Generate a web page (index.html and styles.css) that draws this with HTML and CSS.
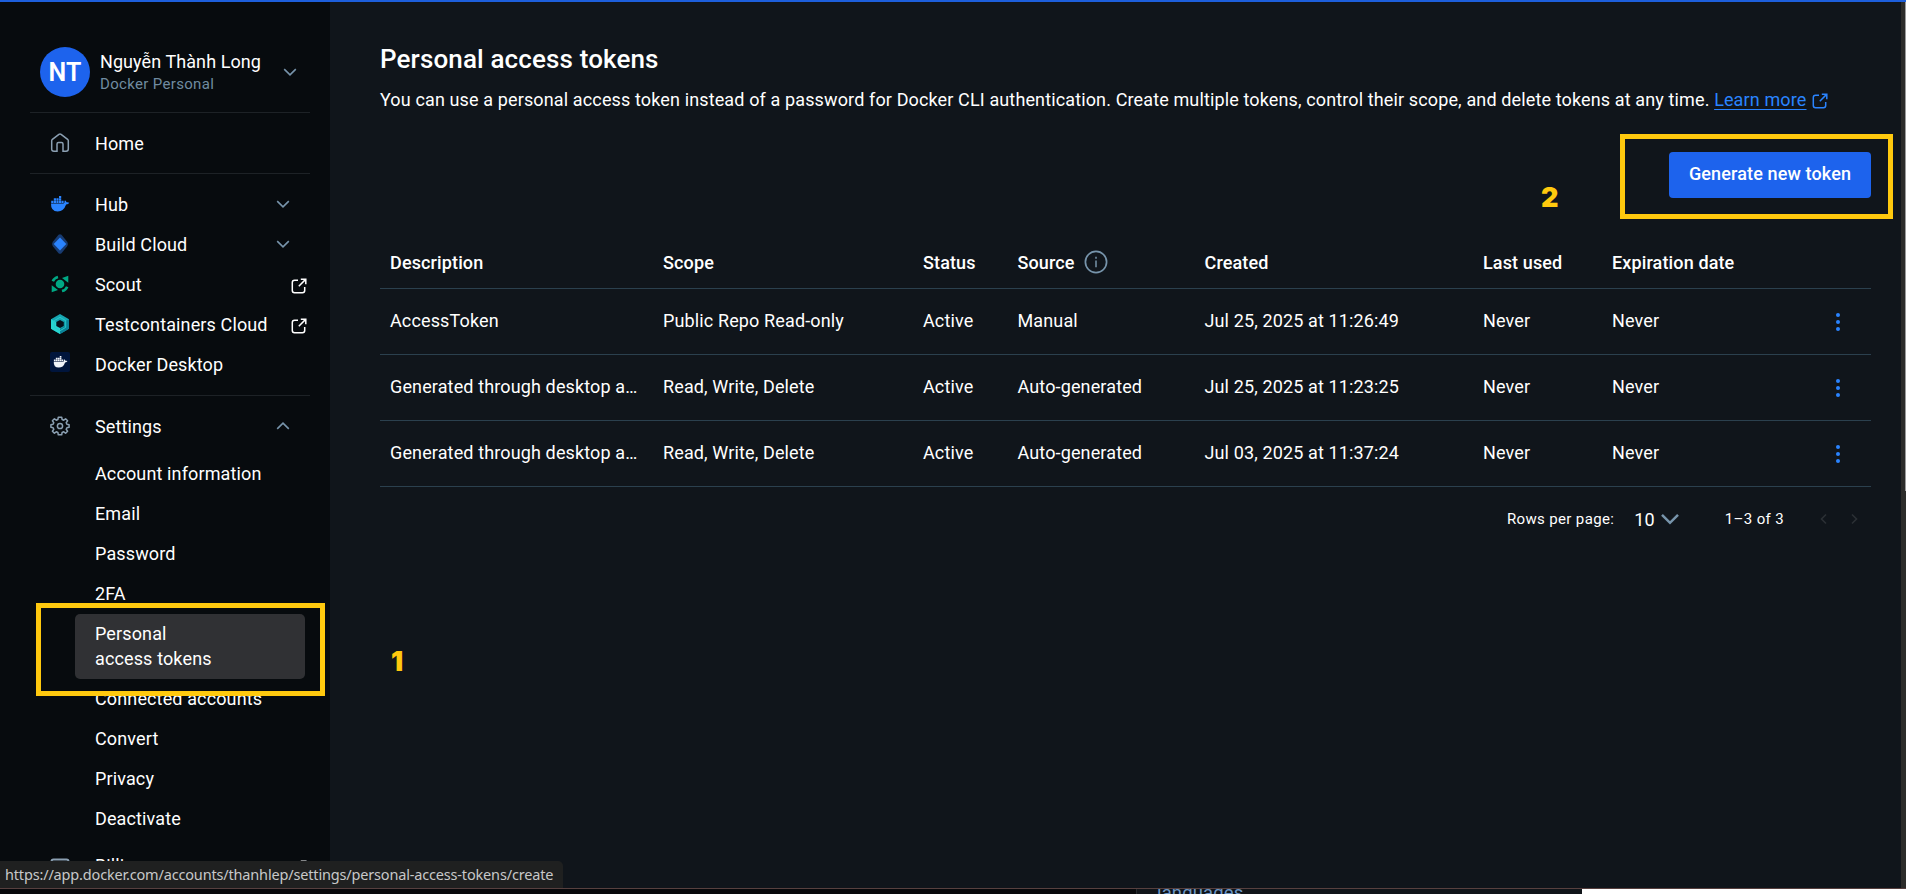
FILE: index.html
```html
<!DOCTYPE html>
<html lang="en">
<head>
<meta charset="utf-8">
<title>Personal access tokens</title>
<link rel="stylesheet" href="styles.css">
</head>
<body>
<svg class="defs" aria-hidden="true">
  <symbol id="down" viewBox="0 0 14 8"><path d="M1.2 1.2 7 6.8l5.8-5.6" fill="none" stroke="currentColor" stroke-width="1.6"/></symbol>
  <symbol id="up" viewBox="0 0 14 8"><path d="M1.2 6.8 7 1.2l5.8 5.6" fill="none" stroke="currentColor" stroke-width="1.6"/></symbol>
  <symbol id="ext" viewBox="0 0 16 16"><path d="M7 2.3H3.5Q1.3 2.3 1.3 4.500V12.500Q1.300 14.700 3.500 14.700H11.500Q13.700 14.700 13.700 12.500V9M9.800 1.200H14.800V6.200M14.600 1.400 7.800 8.200" fill="none" stroke="currentColor" stroke-width="1.500"/></symbol>
  <symbol id="whale" viewBox="0 0 20 16"><path d="M1 7.500H13.500Q14.800 7.300 14.500 5.300L15 4.300Q16.300 5.100 16.500 6.300Q18.300 6 19.300 6.800Q18.500 8.400 16.100 8.500Q13.800 15.400 7.600 15.400Q.7 15.400 1 7.500Z" fill="currentColor"/><path d="M1.200 4.800h2.200V7H1.200zM3.800 4.800H6V7H3.800zM6.400 4.800h2.200V7H6.400zM9 4.800h2.200V7H9zM11.600 4.800h2V7h-2zM3.800 2.300H6v2.100H3.800zM6.400 2.300h2.200v2.100H6.400zM9 2.300h2.200v2.100H9zM9 0h2.200v1.900H9z" fill="currentColor"/></symbol>
</svg>
<div class="screen">
  <div class="window">
    <aside class="sidebar">
      <div class="profile">
        <div class="avatar">NT</div>
        <div class="who"><span class="name">Nguyễn Thành Long</span><span class="plan">Docker Personal</span></div>
        <svg class="chev"><use href="#down"/></svg>
      </div>
      <nav class="group home">
        <div class="item"><svg class="icon muted" viewBox="0 0 20 20"><path d="M1.700 7.800Q1.700 6.900 2.400 6.300L8.900 1.300Q10 .5 11.100 1.300L17.600 6.300Q18.300 6.900 18.300 7.800V16Q18.300 18.200 16.100 18.200H13V11Q13 9.500 11.500 9.500H8.500Q7 9.500 7 11V18.200H3.900Q1.700 18.200 1.700 16Z" fill="none" stroke="currentColor" stroke-width="1.500"/></svg><span>Home</span></div>
      </nav>
      <nav class="group products">
        <div class="item"><svg class="icon hub"><use href="#whale"/></svg><span>Hub</span><svg class="chev"><use href="#down"/></svg></div>
        <div class="item"><svg class="icon" viewBox="0 0 20 20"><path d="M8.500.8Q10-.5 11.500.8L17 7.500Q18.700 10 17 12.500L11.500 19.200Q10 20.500 8.500 19.200L3 12.500Q1.300 10 3 7.500Z" fill="#183b70"/><path d="M10 3.600 16.300 10 10 16.400 3.700 10Z" fill="#2a84ff"/></svg><span>Build Cloud</span><svg class="chev"><use href="#down"/></svg></div>
        <div class="item"><svg class="icon" viewBox="0 0 20 20"><circle cx="10" cy="10" r="4.300" fill="#00a884"/><path d="M18.300 1.700V8.700L15.300 6.500 12 3.900ZM1.700 18.300V11.300L4.700 13.500 8 16.100Z" fill="#00a884"/><path d="M2.800 7.300Q4.100 3.900 8 2.900M17.200 12.700Q15.900 16.100 12 17.100" fill="none" stroke="#00a884" stroke-width="2.600"/></svg><span>Scout</span><svg class="ext"><use href="#ext"/></svg></div>
        <div class="item"><svg class="icon" viewBox="0 0 20 20"><path d="M10 0 19 5.200V14.800L10 20 1 14.800V5.200Z" fill="#17a6b2"/><path d="M1 5.200 10 10V20L1 14.800Z" fill="#27d6d0"/><path d="M19 5.200V14.800L10 20V15L14.500 12.500V7.500Z" fill="#0b8398"/><path d="M10 3.300 15.700 6.600V13.400L10 16.700 4.300 13.400V6.600Z" fill="none" stroke="#26cbc8" stroke-width="1"/><path d="M10 6 13.800 8.100V12L10 14.100 6.300 12V8.100Z" fill="#07111a"/></svg><span>Testcontainers Cloud</span><svg class="ext"><use href="#ext"/></svg></div>
        <div class="item"><span class="icon desktop"><svg><use href="#whale"/></svg></span><span>Docker Desktop</span></div>
      </nav>
      <nav class="group settings">
        <div class="item"><svg class="icon muted" viewBox="0 0 20 20"><path d="M8.300 1.200h3.400l.4 2.300 1.600.7 1.900-1.400 2 2-1.400 1.900.7 1.600 2.200.4v2.600l-2.200.4-.7 1.600 1.400 1.900-2 2-1.900-1.400-1.600.7-.4 2.300H8.300l-.4-2.300-1.600-.7-1.900 1.400-2-2 1.400-1.900-.7-1.600-2.200-.4V8.700l2.200-.4.7-1.600-1.400-1.900 2-2 1.900 1.400 1.600-.7Z" fill="none" stroke="currentColor" stroke-width="1.500" stroke-linejoin="round"/><circle cx="10" cy="10" r="2.600" fill="none" stroke="currentColor" stroke-width="1.500"/></svg><span>Settings</span><svg class="chev"><use href="#up"/></svg></div>
        <div class="sub">
          <a>Account information</a><a>Email</a><a>Password</a><a>2FA</a>
          <a class="active">Personal<br>access tokens</a>
          <a>Connected accounts</a><a>Convert</a><a>Privacy</a><a>Deactivate</a>
        </div>
        <div class="item billing"><svg class="icon muted" viewBox="0 0 20 20"><rect x="1.500" y="3.500" width="17" height="13" rx="2" fill="none" stroke="currentColor" stroke-width="2"/></svg><span>Billing</span><svg class="ext"><use href="#ext"/></svg></div>
      </nav>
    </aside>
    <main class="content">
      <h1>Personal access tokens</h1>
      <p class="intro">You can use a personal access token instead of a password for Docker CLI authentication. Create multiple tokens, control their scope, and delete tokens at any time. <a class="learn">Learn more</a><svg class="learn-ext"><use href="#ext"/></svg></p>
      <div class="actions"><button class="generate">Generate new token</button></div>
      <div class="table">
        <div class="row head"><span>Description</span><span>Scope</span><span>Status</span><span class="source">Source<svg viewBox="0 0 24 24"><circle cx="12" cy="12" r="10.600" fill="none" stroke="currentColor" stroke-width="1.700"/><path d="M12 10.500V17.300M12 6.800V8.700" stroke="currentColor" stroke-width="1.500"/></svg></span><span>Created</span><span>Last used</span><span>Expiration date</span><span></span></div>
        <div class="row"><span>AccessToken</span><span>Public Repo Read-only</span><span>Active</span><span>Manual</span><span>Jul 25, 2025 at 11:26:49</span><span>Never</span><span>Never</span><span class="dots"><i></i><i></i><i></i></span></div>
        <div class="row"><span>Generated through desktop a…</span><span>Read, Write, Delete</span><span>Active</span><span>Auto-generated</span><span>Jul 25, 2025 at 11:23:25</span><span>Never</span><span>Never</span><span class="dots"><i></i><i></i><i></i></span></div>
        <div class="row"><span>Generated through desktop a…</span><span>Read, Write, Delete</span><span>Active</span><span>Auto-generated</span><span>Jul 03, 2025 at 11:37:24</span><span>Never</span><span>Never</span><span class="dots"><i></i><i></i><i></i></span></div>
      </div>
      <div class="pager">
        <span class="label">Rows per page:</span><span class="count">10</span>
        <svg class="select" viewBox="0 0 20 12"><path d="M2 1.800 10 9.800 18 1.800" fill="none" stroke="currentColor" stroke-width="2.500"/></svg>
        <span class="range">1–3 of 3</span>
        <svg class="step" viewBox="0 0 8 12"><path d="M6 1.500 1.500 6 6 10.500" fill="none" stroke="currentColor" stroke-width="1.600"/></svg>
        <svg class="step" viewBox="0 0 8 12"><path d="M2 1.500 6.500 6 2 10.500" fill="none" stroke="currentColor" stroke-width="1.600"/></svg>
      </div>
    </main>
    <div class="scroll"><div class="thumb"></div></div>
  </div>
  <div class="behind"><div class="left"></div><div class="mid">languages</div></div>
  <div class="status">https://app.docker.com/accounts/thanhlep/settings/personal-access-tokens/create</div>
  <div class="mark mark-one"></div>
  <div class="mark mark-two"></div>
  <div class="num num-one">1</div>
  <div class="num num-two">2</div>
</div>
</body>
</html>
```
FILE: styles.css
```css
* { box-sizing: border-box; }
body { margin: 0; background: #fff; font: 18px/25px Roboto, sans-serif; letter-spacing: .13px; color: #fff; overflow: hidden; }
svg { display: block; flex: none; }
.defs { position: absolute; width: 0; height: 0; }
.screen { position: relative; width: 1916px; height: 894px; overflow: hidden; display: flex; flex-direction: column; }
.window { width: 1906px; height: 889px; display: flex; flex: none; overflow: hidden; background: #10151b; border-top: 2px solid #1d5fdc; border-bottom: 1px solid #57403f; }

.sidebar { width: 330px; padding: 0 20px 0 30px; background: #070b0e; overflow: hidden; flex: none; }
.profile { height: 110px; padding: 45px 13px 0 10px; display: flex; align-items: flex-start; }
.avatar { width: 50px; height: 50px; border-radius: 50%; background: #1d63ed; font-size: 25px; line-height: 51px; font-weight: 600; text-align: center; flex: none; }
.who { display: flex; flex-direction: column; margin-left: 10px; padding-top: 3px; white-space: nowrap; }
.name { line-height: 24px; letter-spacing: .08px; }
.plan { font-size: 15px; line-height: 20px; color: #708ba0; letter-spacing: .33px; }
.chev { width: 14px; height: 8px; color: #7794ab; margin-left: auto; }
.profile .chev { margin-top: 21px; }
.group { border-top: 1px solid #1d2226; width: 280px; }
.home { height: 61px; padding-top: 10px; }
.products { height: 222px; padding-top: 10px; }
.settings { padding-top: 10px; }
.item { height: 40px; padding: 0 20px; display: flex; align-items: center; white-space: nowrap; }
.icon { width: 20px; height: 20px; margin-right: 25px; flex: none; }
.muted { color: #8ba0b2; }
.hub { color: #2a84ff; height: 16px; }
.desktop { background: #00153c; border-radius: 2px; margin-top: -4px; padding: 4px 3px; color: #f0f4fa; }
.desktop svg { width: 15px; height: 12px; }
.item .chev { margin-right: 0; }
.ext { width: 16px; height: 16px; margin-left: auto; margin-right: -17px; margin-top: 3px; }
.sub { padding: 8px 5px 7px 45px; }
.sub a { display: block; height: 40px; padding: 7px 20px 8px; white-space: nowrap; }
.sub .active { height: 65px; border-radius: 5px; background: #303134; }
.billing span { padding-bottom: 2px; }

.content { flex: 1; min-width: 0; padding: 42px 30px 0 50px; }
h1 { margin: 0; font-size: 26px; line-height: 30px; font-weight: 500; letter-spacing: .13px; }
.intro { margin: 13px 0 0; height: 25px; display: flex; white-space: pre; }
.learn { color: #2a84ff; text-decoration: underline; text-underline-offset: 3px; }
.learn-ext { width: 16px; height: 16px; color: #2a84ff; margin: 6px 0 0 5px; }
.actions { display: flex; justify-content: flex-end; margin-top: 40px; }
.generate { width: 202px; height: 46px; border: 0; border-radius: 4px; background: #1d63ed; color: #fff; font: 500 18px/25px Roboto, sans-serif; letter-spacing: .13px; padding: 0 0 4px; }
.table { margin-top: 38px; }
.row { height: 66px; display: grid; grid-template-columns: 273px 260px 94.5px 187px 278.5px 129px 208px 1fr; align-items: center; border-bottom: 1px solid #2b404e; }
.row > span { padding: 0 0 3px 10px; white-space: nowrap; }
.head { height: 53px; font-weight: 500; }
.row.head > span { padding: 0 0 0 10px; }
.source { display: flex; align-items: center; }
.source svg { width: 24px; height: 24px; margin-left: 9px; color: #7794ab; }
.row .dots { display: flex; flex-direction: column; align-items: center; gap: 3px; width: 56px; padding: 0; }
.dots i { width: 4px; height: 4px; border-radius: 50%; background: #2a84ff; }
.pager { display: flex; align-items: center; justify-content: flex-end; height: 64px; font-size: 15px; padding-right: 13px; letter-spacing: .36px; }
.count { font-size: 18px; letter-spacing: .13px; margin-left: 20px; padding-top: 1px; }
.select { width: 20px; height: 12px; color: #7794ab; margin-left: 5px; }
.range { margin-left: 45px; margin-right: 36px; }
.step { width: 8px; height: 12px; color: #2b3035; }
.step + .step { margin-left: 22px; }
.scroll { width: 5px; background: #2c2c2a; flex: none; }
.thumb { width: 1px; height: 489px; margin-left: auto; background: #9b9b9b; }

.behind { display: flex; height: 5px; overflow: hidden; flex: none; }
.left { width: 1136px; background: #07080b; }
.mid { width: 446px; padding-left: 20px; background: #101419; border-left: 1px solid #25282c; color: #6c96c5; font-size: 18.500px; line-height: 9px; }
.status { position: absolute; left: 0; top: 861px; width: 563px; height: 27px; padding-left: 5px; background: #1f2020; border-top-right-radius: 5px; color: #c7c8c9; font: 14.5px/27px "Noto Sans", sans-serif; letter-spacing: -.17px; white-space: nowrap; }
.mark { position: absolute; border: 5px solid #ffc90e; }
.mark-one { left: 36px; top: 603px; width: 289px; height: 93px; }
.mark-two { left: 1620px; top: 134px; width: 273px; height: 85px; }
.num { position: absolute; color: #ffc90e; font: 900 27px/30px Inter, sans-serif; letter-spacing: 0; }
.num-one { left: 391px; top: 647px; }
.num-two { left: 1541px; top: 183px; }
```
